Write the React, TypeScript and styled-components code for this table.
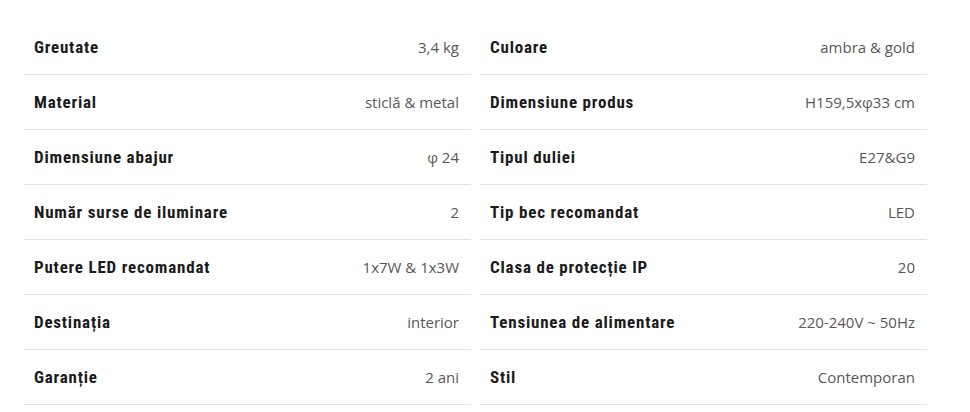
import styled, { createGlobalStyle } from 'styled-components';

const GlobalStyle = createGlobalStyle`
    body {
        margin: 0;
        background: #fff;
    }
`;

const specs: [string, string][][] = [
    [
        ['Greutate', '3,4 kg'],
        ['Material', 'sticlă & metal'],
        ['Dimensiune abajur', 'φ 24'],
        ['Număr surse de iluminare', '2'],
        ['Putere LED recomandat', '1x7W & 1x3W'],
        ['Destinația', 'interior'],
        ['Garanție', '2 ani']
    ],
    [
        ['Culoare', 'ambra & gold'],
        ['Dimensiune produs', 'H159,5xφ33 cm'],
        ['Tipul duliei', 'E27&G9'],
        ['Tip bec recomandat', 'LED'],
        ['Clasa de protecție IP', '20'],
        ['Tensiunea de alimentare', '220-240V ~ 50Hz'],
        ['Stil', 'Contemporan']
    ]
];

const StyledTable = styled.section`
    display: grid;
    grid-template-columns: 447px 447px;
    column-gap: 9px;
    padding: 20px 0 0 24px;
`;

const StyledColumn = styled.div`
    display: flex;
    flex-direction: column;
`;

const StyledRow = styled.div`
    display: flex;
    align-items: center;
    justify-content: space-between;
    height: 54px;
    padding: 0 12px 0 10px;
    border-bottom: 1px solid #e3e3e3;
`;

const StyledLabel = styled.span`
    font-family: 'Roboto Condensed', 'Roboto', sans-serif;
    font-stretch: condensed;
    font-weight: 700;
    font-size: 17px;
    letter-spacing: 0.8px;
    color: #1b1b1b;
`;

const StyledValue = styled.span`
    font-family: 'Open Sans', 'Liberation Sans', sans-serif;
    font-size: 15px;
    color: #585858;
`;

export default function App() {
    return (
        <>
            <GlobalStyle />
            <StyledTable>
                {specs.map((column, i) => (
                    <StyledColumn key={i}>
                        {column.map(([label, value]) => (
                            <StyledRow key={label}>
                                <StyledLabel>{label}</StyledLabel>
                                <StyledValue>{value}</StyledValue>
                            </StyledRow>
                        ))}
                    </StyledColumn>
                ))}
            </StyledTable>
        </>
    );
}
